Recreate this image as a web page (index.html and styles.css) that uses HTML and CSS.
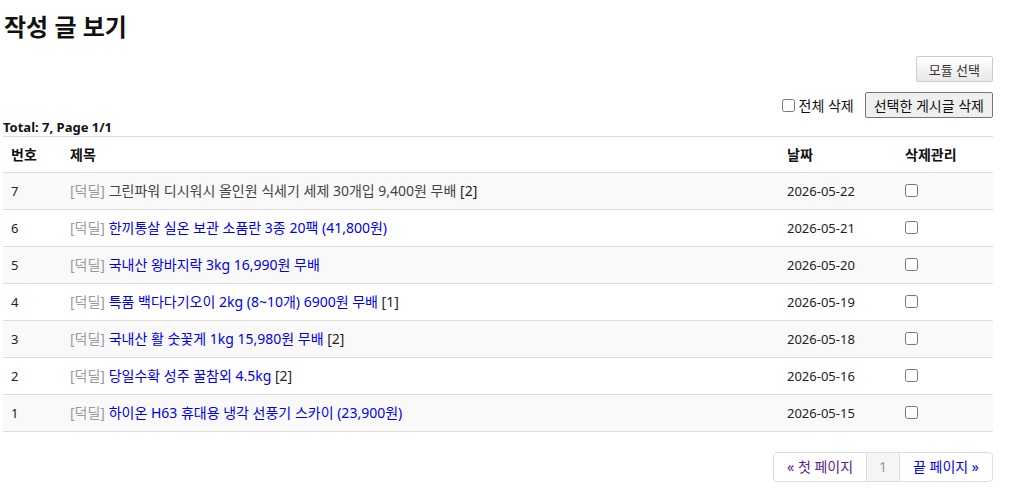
FILE: index.html
```html
<!DOCTYPE html>
<html lang="ko">
<head>
  <meta charset="UTF-8" />
  <title>작성 글 보기</title>
  <meta name="viewport" content="width=device-width, initial-scale=1.0" />
  <link rel="stylesheet" href="styles.css">
</head>
<body>
  <div class="wrap">
    <h2>작성 글 보기</h2>

    <div class="tools">
      <button class="btn-module" type="button">모듈 선택</button>
    </div>
    <div class="tools del-tools">
      <label class="chk-all"><input type="checkbox" /> 전체 삭제</label>
      <button class="btn-del" type="button">선택한 게시글 삭제</button>
    </div>

    <div class="total">Total: 7, Page 1/1</div>

    <table class="list">
      <thead>
        <tr>
          <th class="c-no">번호</th>
          <th>제목</th>
          <th class="c-date">날짜</th>
          <th class="c-del">삭제관리</th>
        </tr>
      </thead>
      <tbody>
        <tr>
          <td>7</td>
          <td class="subj"><span class="cat">[덕딜]</span> <a class="visited" href="#">그린파워 디시워시 올인원 식세기 세제 30개입 9,400원 무배</a> <span class="cmt">[2]</span></td>
          <td>2026-05-22</td>
          <td><input type="checkbox" /></td>
        </tr>
        <tr>
          <td>6</td>
          <td class="subj"><span class="cat">[덕딜]</span> <a href="#">한끼통살 실온 보관 소품란 3종 20팩 (41,800원)</a></td>
          <td>2026-05-21</td>
          <td><input type="checkbox" /></td>
        </tr>
        <tr>
          <td>5</td>
          <td class="subj"><span class="cat">[덕딜]</span> <a href="#">국내산 왕바지락 3kg 16,990원 무배</a></td>
          <td>2026-05-20</td>
          <td><input type="checkbox" /></td>
        </tr>
        <tr>
          <td>4</td>
          <td class="subj"><span class="cat">[덕딜]</span> <a href="#">특품 백다다기오이 2kg (8~10개) 6900원 무배</a> <span class="cmt">[1]</span></td>
          <td>2026-05-19</td>
          <td><input type="checkbox" /></td>
        </tr>
        <tr>
          <td>3</td>
          <td class="subj"><span class="cat">[덕딜]</span> <a href="#">국내산 활 숫꽃게 1kg 15,980원 무배</a> <span class="cmt">[2]</span></td>
          <td>2026-05-18</td>
          <td><input type="checkbox" /></td>
        </tr>
        <tr>
          <td>2</td>
          <td class="subj"><span class="cat">[덕딜]</span> <a href="#">당일수확 성주 꿀참외 4.5kg</a> <span class="cmt">[2]</span></td>
          <td>2026-05-16</td>
          <td><input type="checkbox" /></td>
        </tr>
        <tr>
          <td>1</td>
          <td class="subj"><span class="cat">[덕딜]</span> <a href="#">하이온 H63 휴대용 냉각 선풍기 스카이 (23,900원)</a></td>
          <td>2026-05-15</td>
          <td><input type="checkbox" /></td>
        </tr>
      </tbody>
    </table>

    <div class="paging">
      <ul>
        <li><a class="first" href="#">&laquo; 첫 페이지</a></li>
        <li class="active"><span>1</span></li>
        <li><a href="#">끝 페이지 &raquo;</a></li>
      </ul>
    </div>
  </div>
</body>
</html>
```

FILE: styles.css
```css
body {
  margin: 0;
  font-family: "Noto Sans", "Noto Sans CJK KR", sans-serif;
  font-size: 13px;
  color: #222;
  background: #fff;
}

.wrap {
  width: 990px;
  margin-left: 3px;
}

h2 {
  margin: 0;
  padding: 10px 0 0 1px;
  font-size: 24px;
  line-height: 34px;
  font-weight: bold;
  color: #111;
}

.tools {
  display: flex;
  justify-content: flex-end;
  align-items: center;
}

.tools:first-of-type {
  margin-top: 12px;
}

.btn-module {
  height: 26px;
  padding: 0 12px;
  font-family: inherit;
  font-size: 13px;
  color: #333;
  background: linear-gradient(#fff, #e8e8e8);
  border: 1px solid #ccc;
  border-radius: 2px;
}

.del-tools {
  margin-top: 10px;
  gap: 11px;
}

.chk-all {
  display: flex;
  align-items: center;
  font-size: 14px;
  color: #111;
}

.chk-all input {
  margin: 0 4px 0 0;
}

.btn-del {
  height: 26px;
  padding: 0 8px;
  font-family: inherit;
  font-size: 14px;
  color: #111;
  background: #efefef;
  border: 1px solid #767676;
  border-radius: 2px;
}

.total {
  margin-top: 1px;
  font-weight: bold;
  color: #111;
  line-height: 17px;
}

table.list {
  width: 100%;
  border-collapse: collapse;
  border-top: 1px solid #ddd;
}

.list th,
.list td {
  height: 20px;
  padding: 8px 8px 7px;
  line-height: 20px;
  text-align: left;
  vertical-align: top;
  border-bottom: 1px solid #ddd;
}

.list th {
  font-size: 14px;
  font-weight: bold;
  color: #111;
}

.list td.subj {
  font-size: 14px;
}

.list tbody tr:nth-child(odd) {
  background: #f9f9f9;
}

.c-no { width: 43px; }
.c-date { width: 102px; }
.c-del { width: 80px; }

.list input[type="checkbox"] {
  margin: 3px 0 0;
}

.cat {
  color: #999;
}

.list a {
  color: #0000ee;
  text-decoration: none;
}

.list a.visited {
  color: #444;
}

.cmt {
  color: #222;
}

.paging {
  display: flex;
  justify-content: flex-end;
  margin-top: 20px;
}

.paging ul {
  display: flex;
  margin: 0;
  padding: 0;
  list-style: none;
  border: 1px solid #ddd;
  border-radius: 4px;
  font-size: 14px;
}

.paging li a,
.paging li span {
  display: block;
  padding: 0 13px;
  line-height: 28px;
  text-decoration: none;
  color: #0000ee;
}

.paging li + li {
  border-left: 1px solid #ddd;
}

.paging a.first {
  color: #551a8b;
}

.paging li.active span {
  padding: 0 12px;
  background: #f5f5f5;
  color: #999;
}
```
